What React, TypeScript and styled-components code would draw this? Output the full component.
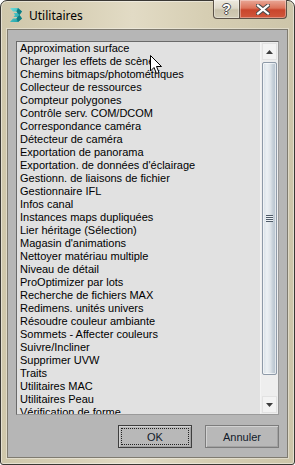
import React from "react";
import styled, { createGlobalStyle } from "styled-components";

const GlobalStyle = createGlobalStyle`
  html, body {
    margin: 0;
    padding: 0;
    background: #ffffff;
    overflow: hidden;
  }
`;

const utilities = [
  "Approximation surface",
  "Charger les effets de scène",
  "Chemins bitmaps/photométriques",
  "Collecteur de ressources",
  "Compteur polygones",
  "Contrôle serv. COM/DCOM",
  "Correspondance caméra",
  "Détecteur de caméra",
  "Exportation de panorama",
  "Exportation. de données d'éclairage",
  "Gestionn. de liaisons de fichier",
  "Gestionnaire IFL",
  "Infos canal",
  "Instances maps dupliquées",
  "Lier héritage (Sélection)",
  "Magasin d'animations",
  "Nettoyer matériau multiple",
  "Niveau de détail",
  "ProOptimizer par lots",
  "Recherche de fichiers MAX",
  "Redimens. unités univers",
  "Résoudre couleur ambiante",
  "Sommets - Affecter couleurs",
  "Suivre/Incliner",
  "Supprimer UVW",
  "Traits",
  "Utilitaires MAC",
  "Utilitaires Peau",
  "Vérification de forme",
];

const Window = styled.div`
  position: relative;
  box-sizing: border-box;
  width: 295px;
  height: 465px;
  display: flex;
  flex-direction: column;
  padding: 0 6px 6px 6px;
  border: 1px solid #3a3834;
  border-radius: 7px 7px 3px 3px;
  background: linear-gradient(
    90deg,
    #cfc7ab 0%,
    #d8d0b6 25%,
    #e2dbc5 45%,
    #d6ceb3 70%,
    #cdc5a9 100%
  );
  box-shadow: inset 0 0 0 1px rgba(255, 255, 255, 0.45);
`;

const TitleBar = styled.div`
  height: 28px;
  display: flex;
  align-items: flex-start;
`;

const TitleIcon = styled.div`
  width: 16px;
  height: 16px;
  margin: 6px 0 0 1px;
  display: flex;
`;

const TitleText = styled.div`
  margin: 6px 0 0 5px;
  font-family: "Noto Sans", "Open Sans", sans-serif;
  font-size: 12px;
  line-height: 17px;
  color: #000;
  flex: 1;
`;

const CaptionButtons = styled.div`
  display: flex;
  margin: -1px 1px 0 0;
`;

const CaptionButton = styled.div<{ $close?: boolean }>`
  box-sizing: border-box;
  width: ${(p) => (p.$close ? "47px" : "27px")};
  height: 19px;
  display: flex;
  align-items: center;
  justify-content: center;
  border: 1px solid #5b5248;
  border-top: none;
  border-left: ${(p) => (p.$close ? "none" : "1px solid #5b5248")};
  border-radius: ${(p) => (p.$close ? "0 0 4px 0" : "0 0 0 4px")};
  background: ${(p) =>
    p.$close
      ? "linear-gradient(180deg, #e9a897 0%, #dc735a 45%, #c9452c 55%, #d0573c 100%)"
      : "linear-gradient(180deg, #eeeadf 0%, #ded8c8 45%, #c9c2ab 55%, #d2ccb7 100%)"};
  box-shadow: inset 0 0 0 1px rgba(255, 255, 255, 0.35);
  font-family: "Liberation Sans", Arial, sans-serif;
  font-weight: bold;
  font-size: 14px;
  color: #fff;
  text-shadow: -1px 0 #4c4c4c, 1px 0 #4c4c4c, 0 -1px #4c4c4c, 0 1px #4c4c4c;
`;

const Client = styled.div`
  flex: 1;
  display: flex;
  flex-direction: column;
  padding: 11px 8px 9px 8px;
  background: #b6b6b6;
  border: 1px solid #7f7b70;
  box-shadow: 0 0 0 1px rgba(255, 255, 255, 0.35);
`;

const ListBox = styled.div`
  height: 374px;
  box-sizing: border-box;
  display: flex;
  border: 1px solid #6a6a6a;
  border-right-color: #9a9a9a;
  border-bottom-color: #9a9a9a;
  background: #e1e1e1;
`;

const Items = styled.div`
  flex: 1;
  overflow: hidden;
`;

const Row = styled.div`
  height: 13px;
  line-height: 13px;
  padding-left: 3px;
  font-family: "Liberation Sans", Arial, sans-serif;
  font-size: 11px;
  color: #000;
  white-space: nowrap;
`;

const ScrollBar = styled.div`
  width: 17px;
  display: flex;
  flex-direction: column;
  background: #eeeeee;
  border-left: 1px solid #f4f4f4;
`;

const ArrowButton = styled.div`
  box-sizing: border-box;
  height: 17px;
  margin: 1px;
  display: flex;
  align-items: center;
  justify-content: center;
  background: #f3f3f3;
  border: 1px solid #e2e2e2;
`;

const Track = styled.div`
  flex: 1;
  padding: 0 1px;
`;

const Thumb = styled.div`
  box-sizing: border-box;
  height: 313px;
  margin-top: 1px;
  display: flex;
  align-items: center;
  justify-content: center;
  border: 1px solid #8e9aa8;
  border-radius: 2px;
  background: linear-gradient(
    90deg,
    #d6dfe6 0%,
    #edf1f4 30%,
    #dfe5ea 55%,
    #c6d0d9 75%,
    #b5c1cc 100%
  );
  box-shadow: inset 0 0 0 1px rgba(255, 255, 255, 0.6);
`;

const Grip = styled.div`
  width: 7px;
  height: 7px;
  background: repeating-linear-gradient(
    180deg,
    #4e5b68 0px,
    #4e5b68 1px,
    #eef2f5 1px,
    #eef2f5 2px
  );
`;

const ButtonRow = styled.div`
  display: flex;
  justify-content: flex-end;
  gap: 13px;
  margin-top: 10px;
`;

const DialogButton = styled.button<{ $default?: boolean }>`
  position: relative;
  width: 74px;
  height: 23px;
  padding: 0;
  border: 1px solid ${(p) => (p.$default ? "#3e3e3e" : "#7c7c7c")};
  background: #b8b8b8;
  box-shadow: inset 1px 1px 0 #d2d2d2, inset -1px -1px 0 #a2a2a2;
  font-family: "Liberation Sans", Arial, sans-serif;
  font-size: 11px;
  color: #111a2a;
  outline: ${(p) => (p.$default ? "1px dotted #222" : "none")};
  outline-offset: -4px;
`;

const Cursor = styled.div`
  position: absolute;
  left: 149px;
  top: 54px;
  width: 13px;
  height: 20px;
`;

function MaxIcon() {
  return (
    <svg width="16" height="16" viewBox="0 0 16 16">
      <defs>
        <linearGradient id="mx" x1="0" y1="0" x2="1" y2="1">
          <stop offset="0" stopColor="#6fe0df" />
          <stop offset="1" stopColor="#14959b" />
        </linearGradient>
      </defs>
      <path
        d="M2 1 H10 L14 4.5 L11.5 8 L14 11.5 L10 15 H2 L5 11.5 H8.5 L9.5 10 H5.5 L7 8 L5.5 6 H9.5 L8.5 4.5 H5 Z"
        fill="url(#mx)"
      />
      <path d="M10 1 L14 4.5 L11.5 8 L9.5 6 L8.5 4.5 Z" fill="#0f7b82" />
      <path d="M11.5 8 L14 11.5 L10 15 L8.5 11.5 L9.5 10 Z" fill="#0f7b82" />
    </svg>
  );
}

function CloseGlyph() {
  return (
    <svg width="14" height="11" viewBox="0 0 14 11">
      <path
        d="M2 1.5 L12 9.5 M12 1.5 L2 9.5"
        stroke="#4a4a4a"
        strokeWidth="4.2"
        strokeLinecap="square"
      />
      <path
        d="M2 1.5 L12 9.5 M12 1.5 L2 9.5"
        stroke="#ffffff"
        strokeWidth="2.2"
        strokeLinecap="square"
      />
    </svg>
  );
}

function Arrow({ up }: { up?: boolean }) {
  return (
    <svg width="7" height="4" viewBox="0 0 7 4">
      <path d={up ? "M0 4 L3.5 0 L7 4 Z" : "M0 0 L3.5 4 L7 0 Z"} fill="#3d3d3d" />
    </svg>
  );
}

function MouseCursor() {
  return (
    <svg width="13" height="20" viewBox="0 0 13 20">
      <path
        d="M0.5 0.5 L0.5 16 L4 12.5 L6.5 18.5 L9 17.5 L6.5 11.5 L11.5 11.5 Z"
        fill="#ffffff"
        stroke="#000000"
        strokeWidth="1"
        strokeLinejoin="miter"
      />
    </svg>
  );
}

export default function App() {
  return (
    <>
      <GlobalStyle />
      <Window>
        <TitleBar>
          <TitleIcon>
            <MaxIcon />
          </TitleIcon>
          <TitleText>Utilitaires</TitleText>
          <CaptionButtons>
            <CaptionButton>?</CaptionButton>
            <CaptionButton $close>
              <CloseGlyph />
            </CaptionButton>
          </CaptionButtons>
        </TitleBar>
        <Client>
          <ListBox>
            <Items>
              {utilities.map((name) => (
                <Row key={name}>{name}</Row>
              ))}
            </Items>
            <ScrollBar>
              <ArrowButton>
                <Arrow up />
              </ArrowButton>
              <Track>
                <Thumb>
                  <Grip />
                </Thumb>
              </Track>
              <ArrowButton>
                <Arrow />
              </ArrowButton>
            </ScrollBar>
          </ListBox>
          <ButtonRow>
            <DialogButton $default>OK</DialogButton>
            <DialogButton>Annuler</DialogButton>
          </ButtonRow>
        </Client>
        <Cursor>
          <MouseCursor />
        </Cursor>
      </Window>
    </>
  );
}
